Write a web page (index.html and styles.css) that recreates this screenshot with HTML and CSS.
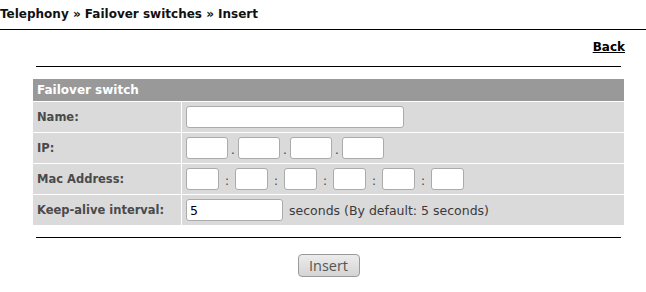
FILE: index.html
```html
<!DOCTYPE html>
<html>
<head>
<meta charset="utf-8">
<title>Failover switches - Insert</title>
<link rel="stylesheet" href="styles.css">
</head>
<body>
<div class="title">Telephony » Failover switches » Insert</div>
<div class="toolbar"><a href="#" class="back">Back</a></div>
<div class="content">
  <hr class="rule">
  <table class="form-table">
    <colgroup><col class="col-label"><col class="col-field"></colgroup>
    <tr><th colspan="2" class="head">Failover switch</th></tr>
    <tr>
      <td class="label">Name:</td>
      <td class="field"><div class="fields"><input type="text" class="in-name"></div></td>
    </tr>
    <tr>
      <td class="label">IP:</td>
      <td class="field"><div class="fields">
        <input type="text" class="in-ip"><span class="sep-ip">.</span><input type="text" class="in-ip"><span class="sep-ip">.</span><input type="text" class="in-ip"><span class="sep-ip">.</span><input type="text" class="in-ip">
      </div></td>
    </tr>
    <tr>
      <td class="label">Mac Address:</td>
      <td class="field"><div class="fields">
        <input type="text" class="in-mac"><span class="sep-mac">:</span><input type="text" class="in-mac"><span class="sep-mac">:</span><input type="text" class="in-mac"><span class="sep-mac">:</span><input type="text" class="in-mac"><span class="sep-mac">:</span><input type="text" class="in-mac"><span class="sep-mac">:</span><input type="text" class="in-mac">
      </div></td>
    </tr>
    <tr>
      <td class="label">Keep-alive interval:</td>
      <td class="field"><div class="fields"><input type="text" class="in-keep" value="5"><span class="hint">seconds (By default: 5 seconds)</span></div></td>
    </tr>
  </table>
  <hr class="rule rule-bottom">
  <div class="actions"><button type="button" class="btn">Insert</button></div>
</div>
</body>
</html>
```
FILE: styles.css
```css
html, body {
  margin: 0;
  padding: 0;
  background: #fff;
}
body {
  font-family: "DejaVu Sans", Verdana, sans-serif;
  color: #000;
}
.title {
  font-size: 12px;
  font-weight: bold;
  line-height: 14px;
  padding: 7px 0 8px 0;
  border-bottom: 1px solid #000;
  color: #111;
}
.toolbar {
  display: flex;
  justify-content: flex-end;
  padding-right: 21px;
  margin-top: 10px;
}
.back {
  font-size: 12px;
  font-weight: bold;
  line-height: 14px;
  color: #000;
  text-decoration: underline;
}
.content {
  margin-left: 32px;
  width: 593px;
}
.rule {
  border: 0;
  border-top: 1px solid #000;
  height: 0;
  margin: 12px 4px 11px 4px;
}
.rule-bottom {
  margin-top: 11px;
  margin-bottom: 16px;
}
.form-table {
  width: 593px;
  table-layout: fixed;
  border-spacing: 1px;
  border-collapse: separate;
}
.col-label { width: 148px; }
.head {
  background: #999;
  color: #fff;
  font-size: 12px;
  font-weight: bold;
  line-height: 14px;
  text-align: left;
  padding: 4px 4px;
  height: 14px;
}
.label {
  background: #dadada;
  color: #4a4a4a;
  font-size: 11.5px;
  font-weight: bold;
  padding: 0 4px;
  height: 30px;
  white-space: nowrap;
}
.field {
  background: #dadada;
  padding: 0 4px;
  height: 30px;
}
.fields {
  display: flex;
  align-items: center;
}
.fields input {
  box-sizing: border-box;
  height: 22px;
  border: 1px solid #ababab;
  border-radius: 3px;
  background: #fff;
  padding: 0 3px;
  margin: 0;
  font-family: "DejaVu Sans", sans-serif;
  font-size: 12.5px;
  color: #000;
}
.in-name { width: 218px; }
.in-ip { width: 42px; }
.in-mac { width: 33px; }
.in-keep { width: 97px; }
.sep-ip, .sep-mac {
  font-size: 12px;
  color: #444;
  text-align: center;
  line-height: 14px;
  padding-top: 4px;
}
.sep-ip { width: 10px; }
.sep-mac { width: 16px; }
.hint {
  margin-left: 6px;
  font-size: 12.5px;
  color: #3a3a3a;
}
.actions {
  display: flex;
  justify-content: center;
}
.btn {
  box-sizing: border-box;
  width: 62px;
  height: 23px;
  border: 1px solid #9a9a9a;
  border-radius: 4px;
  background: linear-gradient(#ececec, #d4d4d4);
  color: #555;
  font-family: "Open Sans", sans-serif;
  font-size: 14.5px;
  line-height: 20px;
  padding: 0;
}
```
